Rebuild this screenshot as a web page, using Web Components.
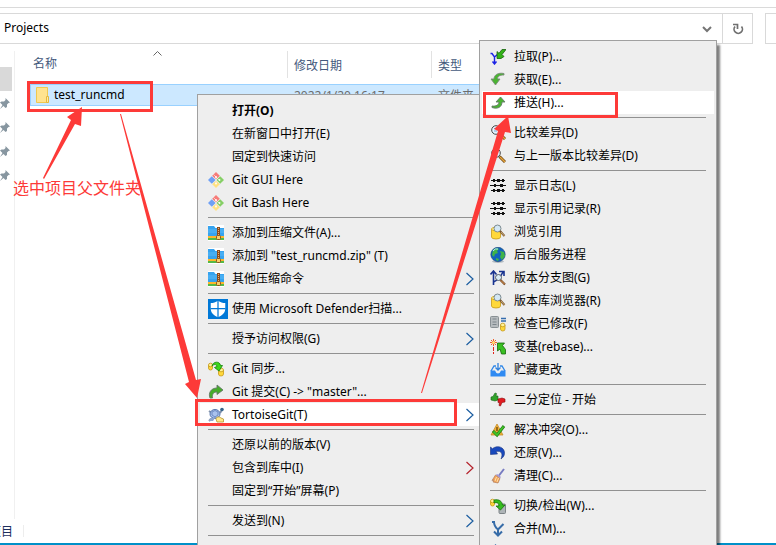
<!DOCTYPE html>
<html lang="zh-CN">
<head>
<meta charset="utf-8">
<title>Projects</title>
<style>
  html, body {
    margin: 0;
    height: 100%;
    overflow: hidden;
  }
  body {
    font-family: "Noto Sans", "Noto Sans CJK SC", sans-serif;
    font-size: 12px;
    color: #000;
    background: #fff;
  }
</style>
</head>
<body>
<explorer-window>
  <address-bar slot="address">Projects</address-bar>
  <quick-access slot="nav"></quick-access>
  <file-list slot="files"></file-list>
  <status-bar slot="status">项目</status-bar>

  <context-menu class="folder-menu" style="--menu-x: 197px; --menu-y: 94px; --menu-width: 288px">
    <menu-item strong>打开(O)</menu-item>
    <menu-item>在新窗口中打开(E)</menu-item>
    <menu-item>固定到快速访问</menu-item>
    <menu-item icon="git">Git GUI Here</menu-item>
    <menu-item icon="git">Git Bash Here</menu-item>
    <menu-separator></menu-separator>
    <menu-item icon="zip">添加到压缩文件(A)...</menu-item>
    <menu-item icon="zip">添加到 "test_runcmd.zip" (T)</menu-item>
    <menu-item icon="zip" submenu>其他压缩命令</menu-item>
    <menu-separator></menu-separator>
    <menu-item icon="defender">使用 Microsoft Defender扫描...</menu-item>
    <menu-separator></menu-separator>
    <menu-item submenu>授予访问权限(G)</menu-item>
    <menu-separator></menu-separator>
    <menu-item icon="sync">Git 同步...</menu-item>
    <menu-item icon="commit">Git 提交(C) -&gt; "master"...</menu-item>
    <menu-item icon="tortoise" submenu active>TortoiseGit(T)</menu-item>
    <menu-separator></menu-separator>
    <menu-item>还原以前的版本(V)</menu-item>
    <menu-item submenu="red">包含到库中(I)</menu-item>
    <menu-item>固定到“开始”屏幕(P)</menu-item>
    <menu-separator></menu-separator>
    <menu-item submenu>发送到(N)</menu-item>
    <menu-separator></menu-separator>
  </context-menu>

  <context-menu class="git-menu" style="--menu-x: 479px; --menu-y: 40px; --menu-width: 238px">
    <menu-item icon="pull">拉取(P)...</menu-item>
    <menu-item icon="fetch">获取(E)...</menu-item>
    <menu-item icon="push" active>推送(H)...</menu-item>
    <menu-separator></menu-separator>
    <menu-item icon="diff">比较差异(D)</menu-item>
    <menu-item icon="diff">与上一版本比较差异(D)</menu-item>
    <menu-separator></menu-separator>
    <menu-item icon="log">显示日志(L)</menu-item>
    <menu-item icon="log">显示引用记录(R)</menu-item>
    <menu-item icon="browse">浏览引用</menu-item>
    <menu-item icon="globe">后台服务进程</menu-item>
    <menu-item icon="graph">版本分支图(G)</menu-item>
    <menu-item icon="browse">版本库浏览器(R)</menu-item>
    <menu-item icon="modified">检查已修改(F)</menu-item>
    <menu-item icon="rebase">变基(rebase)...</menu-item>
    <menu-item icon="stash">贮藏更改</menu-item>
    <menu-separator></menu-separator>
    <menu-item icon="bisect">二分定位 - 开始</menu-item>
    <menu-separator></menu-separator>
    <menu-item icon="resolve">解决冲突(O)...</menu-item>
    <menu-item icon="revert">还原(V)...</menu-item>
    <menu-item icon="clean">清理(C)...</menu-item>
    <menu-separator></menu-separator>
    <menu-item icon="switch">切换/检出(W)...</menu-item>
    <menu-item icon="merge">合并(M)...</menu-item>
    <menu-item icon="branch"></menu-item>
  </context-menu>

  <guide-marks>选中项目父文件夹</guide-marks>
</explorer-window>

<script>
const cylinder = (x, y, w, h) => `
  <path d="M${x} ${y + 2}v${h - 4}q0 2 ${w / 2} 2t${w / 2} -2v-${h - 4}z" fill="#ffd83a" stroke="#c79a18" stroke-width=".8"/>
  <ellipse cx="${x + w / 2}" cy="${y + 2}" rx="${w / 2}" ry="1.8" fill="#fff29a" stroke="#c79a18" stroke-width=".8"/>`;

const ICONS = {
  git: `
    <path d="M8 0l3.800 3.800L8 7.600 4.200 3.800z" fill="#f77b78"/>
    <path d="M3.800 4.200L7.600 8l-3.800 3.800L0 8z" fill="#6fa0f5"/>
    <path d="M12.200 4.200L16 8l-3.800 3.800L8.400 8z" fill="#86cf66"/>
    <path d="M8 8.400l3.800 3.800L8 16l-3.800-3.800z" fill="#ffe183"/>
    <path d="M5.500 2.500l5.500 5.500M8 5v6" stroke="#eee" stroke-width=".7" fill="none"/>
    <circle cx="8" cy="5" r=".9" fill="#fff"/><circle cx="8" cy="11.500" r=".9" fill="#fff"/><circle cx="11.500" cy="8" r=".9" fill="#fff"/>`,
  zip: `
    <rect width="16" height="16" fill="#fff"/>
    <path d="M0 1h6l1.500 2H16v8H0z" fill="#36a3ef"/>
    <path d="M0 4h16v4H0z" fill="#58b9f8" opacity=".5"/>
    <path d="M0 11h16v2H0z" fill="#ffb52b"/><path d="M0 13h16v2H0z" fill="#54b948"/>
    <path d="M9 2h3v9H9z" fill="#8a4b20"/><path d="M10 3h1v1h-1zM10 5h1v1h-1zM10 7h1v1h-1zM10 9h1v1h-1z" fill="#e9b36d"/>
    <rect x="8.500" y="10.500" width="4" height="4" rx="1" fill="#f8d06a" stroke="#8f541b"/>`,
  defender: `
    <rect width="16" height="16" fill="#0078d7"/>
    <path d="M8 1.300c2 1.300 3.700 1.800 5.800 1.800v4.500c0 3.400-2.300 5.600-5.800 7-3.500-1.400-5.800-3.600-5.800-7V3.100C4.300 3.100 6 2.600 8 1.300z" fill="#fff"/>
    <path d="M8 1v14M2 7.700h12" stroke="#0078d7"/>`,
  sync: `
    ${cylinder(0.5, 2, 4, 7)}${cylinder(10.5, 7, 5, 8)}
    <path d="M4 5C5 0 12 0 12.500 4.500h2L11 10 6.500 6.500 9 5.500C8.500 3 6 3 4 5z" fill="#3ed51a" stroke="#128306" stroke-width=".8"/>`,
  commit: `<path d="M2 14C0 9 3 4 9 4V1l6 5-6 4.500V8C5.500 8 4 10 4.500 14z" fill="#45ad29" stroke="#64776a" stroke-width=".9"/>`,
  tortoise: `
    <path d="M1 4l3 2M3 12l-2 2M12 6l2-3" stroke="#8393ab" stroke-width="2"/>
    <ellipse cx="7" cy="7" rx="5" ry="4.500" fill="#a9c2ee" stroke="#5473ab"/>
    <path d="M4 5l3-1.500L10 5v3l-3 2-3-2zM7 10v2" fill="none" stroke="#6e8bc3"/>
    <circle cx="14" cy="2.500" r="1.800" fill="#34668d"/><path d="M2 11h5l-2 3H1z" fill="#8ea5cc"/>
    <path d="M8 12c0-2 3-3 5-1l2.500 1v3H9z" fill="#ffe78a" stroke="#b6952e" stroke-width=".8"/>`,
  pull: `
    <path d="M0.500 4.500h1.500L4.500 8 8 5M4.500 8v6M2.500 12.500l2 2.500 2-2.500" fill="none" stroke="#1c23e5" stroke-width="1.400"/>
    <path d="M7 9.500V2.500L9 4.300 12 .5h4L12 5.500l2 2-3 2z" fill="#33b217" stroke="#17630c" stroke-width=".8"/>`,
  fetch: `<path d="M14 1.500C8 .3 4 3 4 7H1l4.500 6L10 7H7.500C7.500 4 10 3 14 3z" fill="#4ab431" stroke="#7c8a7c" stroke-width=".9"/>`,
  push: `<path d="M2 12.500c5 1.800 10 0 10-5.500h3L10.500 2 6 7h3c0 3-3 4.500-7 4z" fill="#4ab431" stroke="#64796a" stroke-width=".9"/>`,
  diff: `
    <circle cx="6" cy="5" r="4.300" fill="#e6f5ff" stroke="#454545"/>
    <path d="M4 3.500h4M4 6h3" stroke="#75a9d9"/>
    <path d="M9.500 8.500l5.500 5.500" stroke="#6e4412" stroke-width="3"/><path d="M10 9l5 5" stroke="#e6a63c" stroke-width="1.500"/>`,
  log: `
    <path d="M1 2.500h14M0 7.500h16M1 12.500h14" stroke="#111"/>
    <path d="M3 1h2v3H3zM7 1h3v3H7zM12 1h2v3h-2zM4 6h2v3H4zM10 6h3v3h-3zM3 11h2v3H3zM7 11h3v3H7zM12 11h2v3h-2z" fill="#111"/>`,
  browse: `
    ${cylinder(1.5, 3, 9, 12)}
    <circle cx="7.500" cy="4.500" r="3.500" fill="#d3e7f4" stroke="#7d8b91"/>
    <path d="M10 7l4.500 5" stroke="#7b5933" stroke-width="2"/><path d="M11 8l3.500 4" stroke="#c9a878"/>`,
  globe: `
    <ellipse cx="8" cy="14.500" rx="6" ry="1.500" fill="#b5bdc4"/>
    <circle cx="8" cy="7.500" r="7.200" fill="#1263bd" stroke="#164274" stroke-width=".6"/>
    <path d="M3 3c2-2 5-2 6-1L7 4l1 2-3 1-1 3-2-2zM10 4l4 1 1 4-3 4-2-3 1-3zM6 11l3 1-1 2-2-1z" fill="#3fb348"/>
    <path d="M3 4q2-3 5-2" stroke="#b9edff" fill="none"/>`,
  graph: `
    <path d="M3.500 15V2M.5 4.500l3-3.500 3 3.500M3.500 12C8 10 11 6 13 2M9 1.500h5V6" fill="none" stroke="#183390" stroke-width="1.600"/>
    <circle cx="8.500" cy="7.500" r="3" fill="#d8ebf5" stroke="#525b6a"/><path d="M10.500 10l4.500 4.500" stroke="#7a4a24" stroke-width="2.200"/><path d="M11 10.500l3.500 3.500" stroke="#dfa060"/>`,
  modified: `
    <rect x=".5" y=".5" width="8" height="11" rx="1" fill="#b6bbbe" stroke="#899094"/><path d="M2.500 3h4M2.500 6h4M2.500 8.500h4" stroke="#7c858b"/>
    <path d="M11 2.500h5M11 5h5" stroke="#356dae" stroke-width="1.300"/>${cylinder(10.5, 7, 4.5, 8)}`,
  rebase: `
    <path d="M3.500 0v7M0 3.500h7M1 1l5 5M6 1L1 6" stroke="#f0602b"/><circle cx="3.500" cy="3.500" r="1.500" fill="#ffe078"/>
    <path d="M3 8h1v4H3zM3 13h1v2H3z" fill="#e2231a"/>
    <path d="M7.500 4h7l-2 2.500 3 4V15h-4l-1.500-5-2.500 2z" fill="#39bf22" stroke="#14680a" stroke-width=".8"/>`,
  stash: `
    <path d="M1 9l3-5h2M15 9l-3-5h-2" fill="none" stroke="#2e86e8" stroke-width="1.300"/>
    <path d="M.5 8.500h4.500q1 3 3 3t3-3h4.500v6h-15z" fill="#2f8af2"/><path d="M8 1v7M5.500 5.500L8 8l2.500-2.500" fill="none" stroke="#2e80dd" stroke-width="1.300"/>`,
  bisect: `
    <path d="M1 5l2-.5L5 1l1.500.5L6 4h2v4l-3 1-4-1z" fill="#31a22b" stroke="#196318" stroke-width=".6"/>
    <path d="M8 7l4-1 3 1v3l-3 .5L10.500 14l-1.500-.5.500-3H8z" fill="#e11b20" stroke="#8b090c" stroke-width=".6"/>`,
  resolve: `
    <path d="M7 2l6 11H1z" fill="#f2b136" stroke="#c08a2a" stroke-width=".8"/><path d="M7 5v4" stroke="#5c3904" stroke-width="1.200"/>
    <path d="M3 9l4 4 7-9" fill="none" stroke="#1f7d14" stroke-width="3"/><path d="M3.500 9.500L7 13l6.500-8.500" fill="none" stroke="#42c329" stroke-width="1.800"/>`,
  revert: `<path d="M.5 2l2 1.700C7-.3 15 2 14.500 8.500c-.2 2.500-1.500 4-3.500 5.500 2-5 1-8.500-5-7.500l1.500 2.500-7 .5z" fill="#1949bd" stroke="#193280" stroke-width=".6"/>`,
  clean: `
    <path d="M14 1L9 7.500" stroke="#777bc1" stroke-width="2"/>
    <path d="M7 6l4 3-1 1-4-3z" fill="#9b8ed2"/><path d="M5.500 7l4.500 3.500L8 15l-5-1 1-2-2 .5z" fill="#f2a45a" stroke="#a77051" stroke-width=".6"/>
    <path d="M6.500 9L5 13M8.500 10L7 14" stroke="#ffe1aa"/>`,
  switch: `
    ${cylinder(0.5, 1, 4, 7)}<rect x="9" y="6" width="6.500" height="9.500" rx="1" fill="#aeb4b7" stroke="#7c8386"/>
    <path d="M4 2c5-1 8 1 8.500 5H15l-4.500 5L6 8h3c0-3-2-4-5-3z" fill="#35bd1d" stroke="#15700a" stroke-width=".8"/>`,
  merge: `<path d="M2 1h2c0 4 1.500 5.500 4 7.500M13.500 3L8 8.500V14M4 10.500l4 4 4-4" fill="none" stroke="#376ca8" stroke-width="2"/>`,
  branch: `<path d="M5.500 0L9 4H6.500v5h-2V4H2z" fill="#376ca8"/>`,
};

const icon = (name) => (ICONS[name] ? `<svg viewBox="0 0 16 16" aria-hidden="true">${ICONS[name]}</svg>` : '');

class ExplorerWindow extends HTMLElement {
  constructor() {
    super();
    this.attachShadow({ mode: 'open' }).innerHTML = `
      <style>
        :host {
          display: flex;
          flex-direction: column;
          position: relative;
          height: 100vh;
          overflow: hidden;
        }
        .ribbon { height: 7px; border-bottom: 1px solid #dadada; }
        .content { display: flex; flex: 1; padding-top: 7px; min-height: 0; }
      </style>
      <div class="ribbon"></div>
      <slot name="address"></slot>
      <div class="content">
        <slot name="nav"></slot>
        <slot name="files"></slot>
      </div>
      <slot name="status"></slot>
      <slot></slot>
    `;
  }
}

class AddressBar extends HTMLElement {
  constructor() {
    super();
    this.attachShadow({ mode: 'open' }).innerHTML = `
      <style>
        :host { display: flex; gap: 12px; margin-top: 5px; height: 31px; }
        .path, .search { display: flex; box-sizing: border-box; border: 1px solid #d9d9d9; }
        .path { flex: 1; border-left: 0; }
        .search { width: 11px; border-right: 0; }
        .text { flex: 1; padding-left: 4px; line-height: 28px; }
        button {
          display: flex;
          align-items: center;
          justify-content: center;
          width: 30px;
          padding: 0;
          border: 0;
          background: none;
        }
        .refresh { border-left: 1px solid #d9d9d9; }
      </style>
      <div class="path">
        <span class="text"><slot></slot></span>
        <button aria-label="历史记录">
          <svg width="10" height="8" viewBox="0 0 10 8"><path d="M1 2l4 4 4-4" fill="none" stroke="#757575" stroke-width="2"/></svg>
        </button>
        <button class="refresh" aria-label="刷新">
          <svg width="12" height="12" viewBox="0 0 12 12">
            <path d="M3 3.500a4.200 4.200 0 1 0 6.500 0" fill="none" stroke="#707070" stroke-width="1.700"/>
            <path d="M1 1.500h4.500V6" fill="none" stroke="#707070" stroke-width="1.700"/>
          </svg>
        </button>
      </div>
      <div class="search"></div>
    `;
  }
}

class QuickAccess extends HTMLElement {
  constructor() {
    super();
    const pin = `<li><svg width="10" height="11" viewBox="0 0 10 11">
      <path d="M5.500 0L10 4.500 8.500 5 7 6.500V9L5.500 10 3.500 8 0 11l2.500-4L0 4.500 1.500 3.500H4L5.500 2z" fill="#8796a0"/></svg></li>`;
    this.attachShadow({ mode: 'open' }).innerHTML = `
      <style>
        :host { display: block; width: 14px; border-right: 1px solid #f0f0f0; }
        ul { list-style: none; margin: 0; padding: 16px 0 0; }
        li { display: flex; align-items: center; height: 24px; }
        .selected { width: 12px; background: #d9d9d9; }
      </style>
      <ul><li class="selected"></li>${pin.repeat(4)}</ul>
    `;
  }
}

class FileList extends HTMLElement {
  constructor() {
    super();
    this.attachShadow({ mode: 'open' }).innerHTML = `
      <style>
        :host { display: block; flex: 1; padding-left: 15px; }
        table { border-collapse: separate; border-spacing: 0; table-layout: fixed; width: 90%; }
        .name { width: 258px; }
        .date { width: 144px; }
        th, td { box-sizing: border-box; padding: 0 0 0 6px; text-align: left; font-weight: 400; white-space: nowrap; }
        th { height: 27px; color: #44597c; border-right: 1px solid #e2e2e2; }
        th:first-child { padding-left: 3px; vertical-align: top; }
        th:last-child { border-right: 0; }
        .sort { display: block; margin-left: 120px; }
        .head { display: block; line-height: 16px; }
        .gap td { height: 6px; }
        .row td { height: 22px; background: #cce8ff; border: solid #99d1ff; border-width: 1px 0; color: #6d6d6d; }
        .row td:first-child { padding-left: 5px; border-left-width: 1px; color: #000; }
        .file { display: flex; align-items: center; gap: 5px; line-height: 18px; }
      </style>
      <table>
        <colgroup><col class="name"><col class="date"><col></colgroup>
        <thead>
          <tr>
            <th><svg class="sort" width="9" height="5" viewBox="0 0 9 5"><path d="M.5 4.500l4-4 4 4" fill="none" stroke="#666"/></svg><span class="head">名称</span></th>
            <th>修改日期</th>
            <th>类型</th>
          </tr>
        </thead>
        <tbody>
          <tr class="gap"><td colspan="3"></td></tr>
          <tr class="row">
            <td><span class="file"><svg width="13" height="16" viewBox="0 0 13 16">
              <path d="M.5.5h11v15H.5z" fill="#ffe38f" stroke="#f0c850"/><path d="M10.500 9.500h2v6h-2z" fill="#ffe9a8" stroke="#e5b93c"/>
            </svg>test_runcmd</span></td>
            <td>2022/1/20 16:17</td>
            <td>文件夹</td>
          </tr>
        </tbody>
      </table>
    `;
  }
}

class StatusBar extends HTMLElement {
  constructor() {
    super();
    this.attachShadow({ mode: 'open' }).innerHTML = `
      <style>
        :host { display: flex; align-items: center; height: 24px; color: #1d2f5e; border-bottom: 2px solid #0090c8; }
        .count { display: flex; justify-content: flex-end; width: 13px; overflow: hidden; white-space: nowrap; }
        .line { width: 1px; height: 12px; margin-left: 10px; background: #ededed; }
      </style>
      <span class="count"><slot></slot></span><span class="line"></span>
    `;
  }
}

class ContextMenu extends HTMLElement {
  constructor() {
    super();
    this.attachShadow({ mode: 'open' }).innerHTML = `
      <style>
        :host {
          display: flex;
          flex-direction: column;
          position: absolute;
          left: var(--menu-x);
          top: var(--menu-y);
          bottom: -10px;
          width: var(--menu-width);
          box-sizing: border-box;
          padding: 4px 2px;
          background: #eee;
          border: 1px solid #a0a0a0;
          box-shadow: 4px 4px 2px -1px rgba(0, 0, 0, .5);
        }
      </style>
      <slot></slot>
    `;
    this.setAttribute('role', 'menu');
  }
}

class MenuItem extends HTMLElement {
  connectedCallback() {
    if (this.shadowRoot) return;
    const name = this.getAttribute('icon');
    const stroke = this.getAttribute('submenu') === 'red' ? '#b4222c' : '#1b5da0';
    const arrow = this.hasAttribute('submenu')
      ? `<svg class="arrow" width="8" height="14" viewBox="0 0 8 14"><path d="M.5 1L7 7 .5 13" fill="none" stroke="${stroke}" stroke-width="1.200"/></svg>`
      : '';
    this.attachShadow({ mode: 'open' }).innerHTML = `
      <style>
        :host { display: block; flex: none; }
        :host([active]) { background: #fff; }
        :host([strong]) { font-weight: 700; }
        button {
          display: flex;
          align-items: center;
          width: 100%;
          height: 23px;
          padding: 0 8px;
          border: 0;
          background: none;
          color: inherit;
          font: inherit;
          line-height: 23px;
          text-align: left;
          white-space: nowrap;
        }
        .icon { display: flex; flex: none; width: 24px; }
        .icon svg { width: 16px; height: 16px; }
        .icon.defender svg { width: 20px; height: 20px; }
        .label { flex: 1; }
      </style>
      <button role="menuitem">
        <span class="icon ${name || ''}">${icon(name)}</span>
        <span class="label"><slot></slot></span>
        ${arrow}
      </button>
    `;
  }
}

class MenuSeparator extends HTMLElement {
  constructor() {
    super();
    this.attachShadow({ mode: 'open' }).innerHTML = `
      <style>
        :host { display: block; flex: none; height: 1px; margin: 3px 8px; background: #919191; }
      </style>
    `;
  }
}

/* red boxes, arrows and the note drawn over the window */
class GuideMarks extends HTMLElement {
  constructor() {
    super();
    this.attachShadow({ mode: 'open' }).innerHTML = `
      <style>
        :host { position: absolute; inset: 0; color: #fd3a38; pointer-events: none; }
        svg { position: absolute; left: 0; top: 0; }
        .note { position: absolute; left: 13px; top: 176px; font-size: 16px; line-height: 24px; white-space: nowrap; }
      </style>
      <span class="note"><slot></slot></span>
      <svg width="776" height="545" viewBox="0 0 776 545">
        <g fill="none" stroke="currentColor" stroke-width="3">
          <rect x="28.500" y="82.500" width="123" height="28"/>
          <rect x="196.500" y="400.500" width="259" height="24"/>
          <rect x="484.500" y="93.500" width="132" height="23"/>
        </g>
        <g fill="currentColor">
          <path d="M43 178L71 120l-4-3 15-10-1 19-6-2-31 55z"/>
          <path d="M120 114L189 382l-4 2 12 14 4-19-5 1L121 114z"/>
          <path d="M421 393L498 131l-4-2 14-13 3 17-6-1L422 393z"/>
        </g>
      </svg>
    `;
  }
}

customElements.define('explorer-window', ExplorerWindow);
customElements.define('address-bar', AddressBar);
customElements.define('quick-access', QuickAccess);
customElements.define('file-list', FileList);
customElements.define('status-bar', StatusBar);
customElements.define('context-menu', ContextMenu);
customElements.define('menu-item', MenuItem);
customElements.define('menu-separator', MenuSeparator);
customElements.define('guide-marks', GuideMarks);
</script>
</body>
</html>
